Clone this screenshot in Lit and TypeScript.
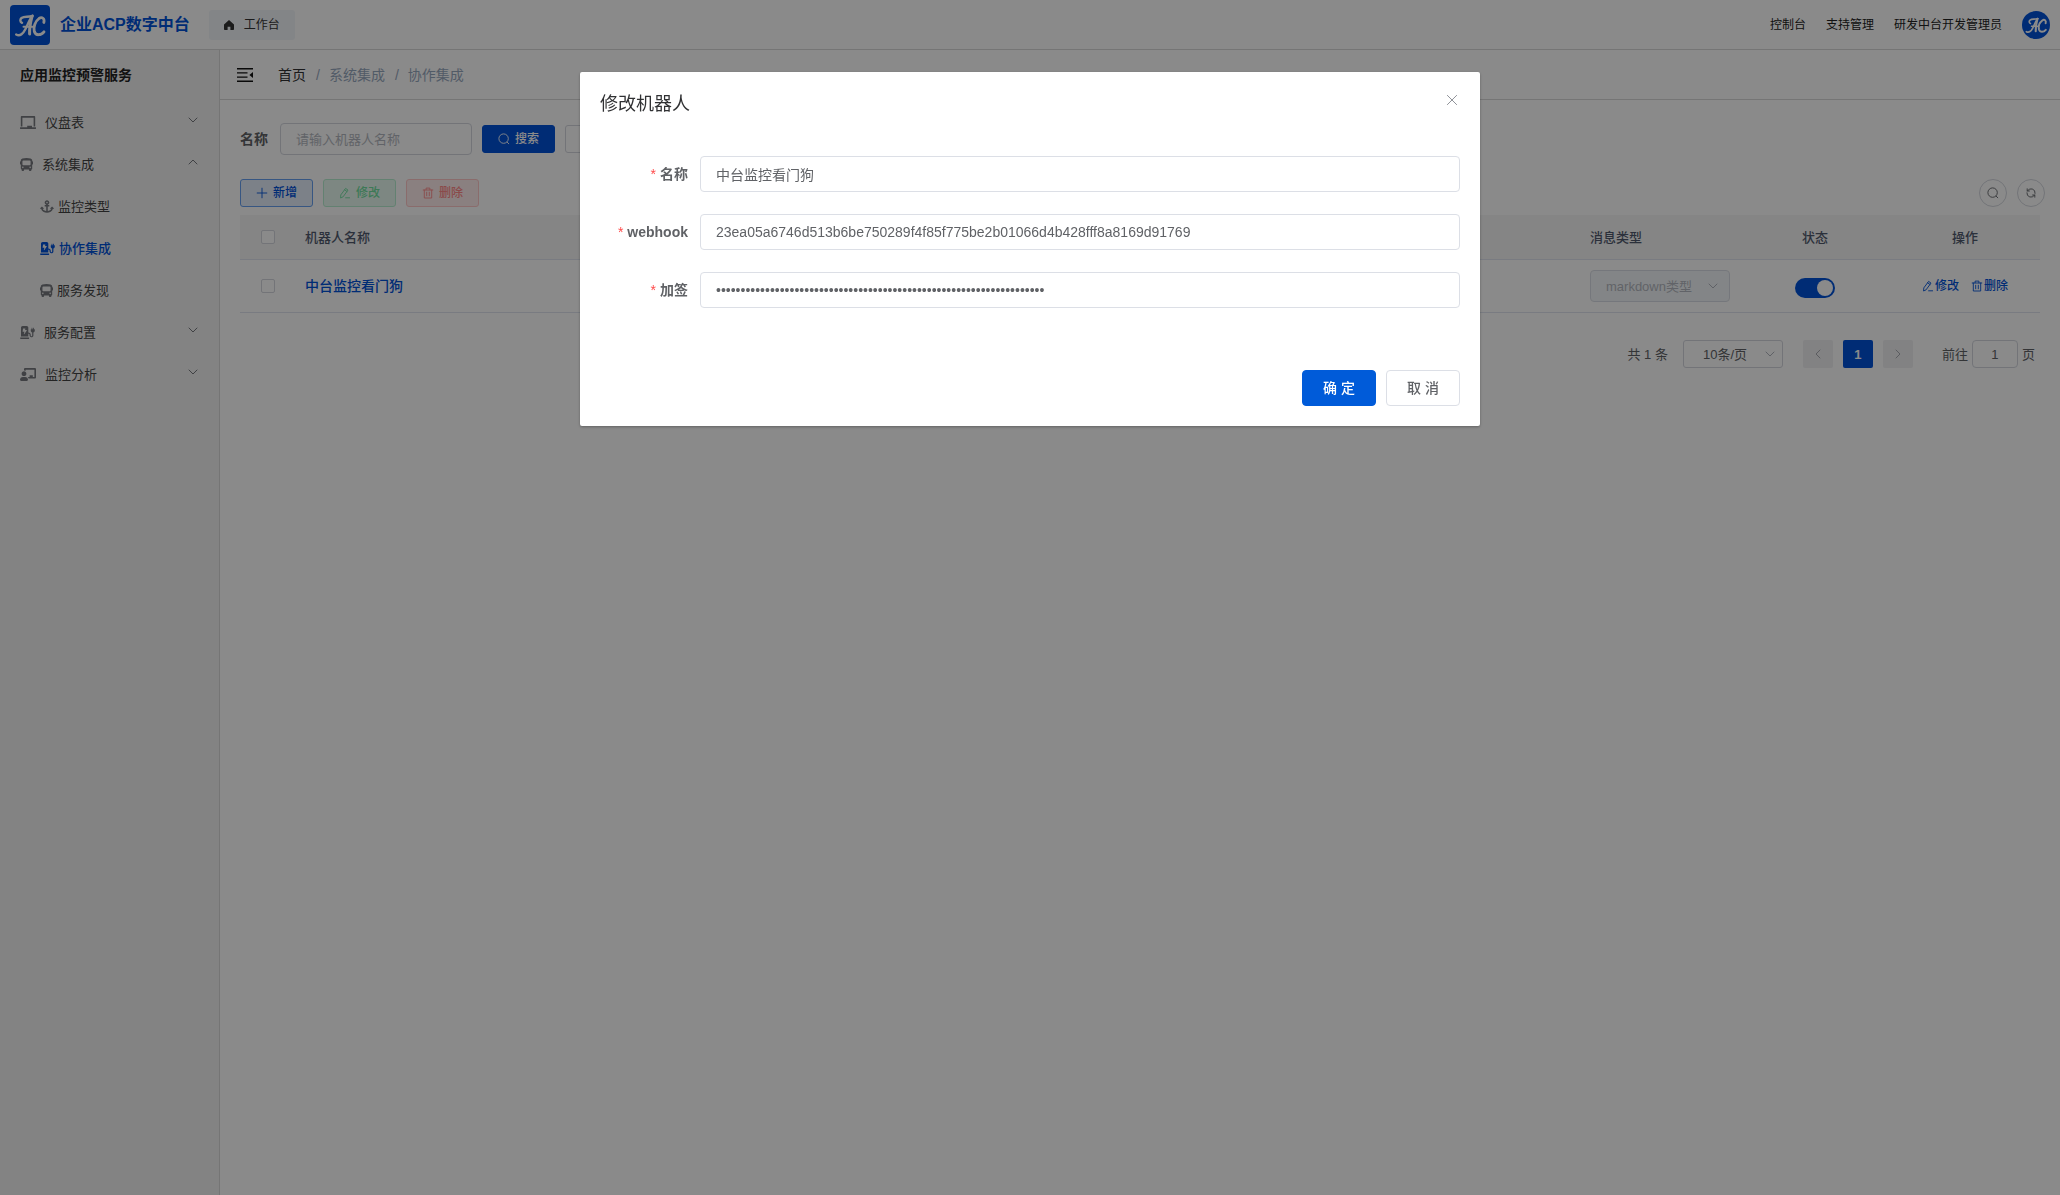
import { LitElement, html, css, svg, nothing } from "lit";
import { customElement, state } from "lit/decorators.js";
import { classMap } from "lit/directives/class-map.js";

type IconDef = { box: string; w: number; h: number; body: unknown };

const line = (d: string, sw = 64) =>
  svg`<path d=${d} fill="none" stroke="currentColor" stroke-width=${sw} stroke-linecap="round" stroke-linejoin="round"></path>`;
const solid = (d: string) => svg`<path d=${d} fill="currentColor"></path>`;

const ICONS: Record<string, IconDef> = {
  board: {
    box: "0 0 640 512", w: 16, h: 13,
    body: solid("M96 64h448v352h64V40c0-22.06-17.94-40-40-40H72C49.94 0 32 17.94 32 40v376h64V64zm528 384H480v-64H288v64H16c-8.84 0-16 7.16-16 16v32c0 8.84 7.16 16 16 16h608c8.84 0 16-7.16 16-16v-32c0-8.84-7.16-16-16-16z"),
  },
  bus: {
    box: "0 0 512 512", w: 13, h: 13,
    body: solid("M488 128h-8V80c0-44.8-99.2-80-224-80S32 35.2 32 80v48h-8c-13.25 0-24 10.74-24 24v80c0 13.25 10.75 24 24 24h8v160c0 17.67 14.33 32 32 32v32c0 17.67 14.33 32 32 32h32c17.67 0 32-14.33 32-32v-32h192v32c0 17.67 14.33 32 32 32h32c17.67 0 32-14.33 32-32v-32h6.4c16 0 25.6-12.8 25.6-25.6V256h8c13.25 0 24-10.75 24-24v-80c0-13.26-10.75-24-24-24zM112 400c-17.67 0-32-14.33-32-32s14.33-32 32-32 32 14.33 32 32-14.33 32-32 32zm16-112c-17.67 0-32-14.33-32-32V128c0-17.67 14.33-32 32-32h256c17.67 0 32 14.33 32 32v128c0 17.67-14.33 32-32 32H128zm272 112c-17.67 0-32-14.33-32-32s14.33-32 32-32 32 14.33 32 32-14.33 32-32 32z"),
  },
  anchor: {
    box: "0 0 576 512", w: 14, h: 13,
    body: solid("M12.971 352h32.394C67.172 454.735 181.944 512 288 512c106.229 0 220.853-57.38 242.635-160h32.394c10.691 0 16.045-12.926 8.485-20.485l-67.029-67.029c-4.686-4.686-12.284-4.686-16.971 0l-67.029 67.029c-7.56 7.56-2.206 20.485 8.485 20.485h35.146c-20.29 54.317-84.963 86.588-144.117 94.015V256h52c6.627 0 12-5.373 12-12v-40c0-6.627-5.373-12-12-12h-52v-5.47c37.281-13.226 63.995-48.725 64-90.495C384.005 43.001 340.93-.202 287.91.001 235.073.2 192 43.13 192 96c0 41.798 26.716 77.319 64 90.53V192h-52c-6.627 0-12 5.373-12 12v40c0 6.627 5.373 12 12 12h52v190.015c-58.936-7.399-123.82-39.679-144.117-94.015h35.146c10.691 0 16.045-12.926 8.485-20.485l-67.029-67.029c-4.686-4.686-12.284-4.686-16.971 0L4.486 331.515C-3.074 339.074 2.28 352 12.971 352zM288 64c17.645 0 32 14.355 32 32s-14.355 32-32 32-32-14.355-32-32 14.355-32 32-32z"),
  },
  station: {
    box: "0 0 576 512", w: 15, h: 13,
    body: solid("M336 448H16c-8.84 0-16 7.16-16 16v32c0 8.84 7.16 16 16 16h320c8.84 0 16-7.16 16-16v-32c0-8.84-7.16-16-16-16zm208-320V80c0-8.84-7.16-16-16-16s-16 7.16-16 16v48h-32V80c0-8.84-7.16-16-16-16s-16 7.16-16 16v48h-16c-8.84 0-16 7.16-16 16v32c0 35.76 23.62 65.69 56 75.93v118.49c0 13.95-9.5 26.92-23.26 29.19C431.22 402.5 416 388.99 416 372v-28c0-48.6-39.4-88-88-88h-8V64c0-35.35-28.65-64-64-64H96C60.65 0 32 28.65 32 64v352h288V304h8c22.09 0 40 17.91 40 40v24.61c0 39.67 28.92 75.16 68.41 79.01C481.71 452.05 520 416.41 520 372V251.93c32.38-10.24 56-40.17 56-75.93v-32c0-8.84-7.16-16-16-16h-16zm-283.91 47.76l-93.7 139c-2.2 3.33-6.21 5.24-10.39 5.24-7.67 0-13.47-6.28-11.67-12.92L167.35 224H108c-7.25 0-12.85-5.59-11.89-11.89l16-107C112.9 99.9 117.98 96 124 96h68c7.88 0 13.62 6.54 11.6 13.21L192 160h57.7c9.24 0 15.01 8.78 10.39 15.76z"),
  },
  teacher: {
    box: "0 0 640 512", w: 16, h: 13,
    body: solid("M208 352c-2.39 0-4.78.35-7.06 1.09C187.98 357.3 174.35 360 160 360c-14.35 0-27.98-2.7-40.95-6.91-2.28-.74-4.66-1.09-7.05-1.09C49.94 352-.33 402.48 0 464.62.14 490.88 21.73 512 48 512h224c26.27 0 47.86-21.12 48-47.38.33-62.14-49.94-112.62-112-112.62zm-48-32c53.02 0 96-42.98 96-96s-42.98-96-96-96-96 42.98-96 96 42.98 96 96 96zM592 0H208c-26.47 0-48 22.25-48 49.59V96c23.42 0 45.1 6.78 64 17.8V64h352v288h-64v-64H384v64h-76.24c19.1 16.69 33.12 38.73 39.69 64H592c26.47 0 48-22.25 48-49.59V49.59C640 22.25 618.47 0 592 0z"),
  },
  home: {
    box: "0 0 10 10", w: 10, h: 10,
    body: solid("M5 0 L10 4.6 V9.2 Q10 10 9.2 10 H6.4 V6.8 H3.6 V10 H0.8 Q0 10 0 9.2 V4.6 Z"),
  },
  down: { box: "0 0 10 10", w: 10, h: 10, body: line("M1 3 L5 7 L9 3", 1) },
  up: { box: "0 0 10 10", w: 10, h: 10, body: line("M1 7 L5 3 L9 7", 1) },
  left: { box: "0 0 10 10", w: 10, h: 10, body: line("M7 1 L3 5 L7 9", 1) },
  right: { box: "0 0 10 10", w: 10, h: 10, body: line("M3 1 L7 5 L3 9", 1) },
  search: {
    box: "0 0 12 12", w: 12, h: 12,
    body: svg`<circle cx="5.6" cy="5.6" r="4.7" fill="none" stroke="currentColor" stroke-width="0.9"></circle>${line("M9.2 9.2 L10.8 10.8", 0.9)}`,
  },
  plus: { box: "0 0 12 12", w: 12, h: 12, body: line("M6 1.2 V10.8 M1.2 6 H10.8", 0.9) },
  edit: { box: "0 0 12 12", w: 12, h: 12, body: line("M1.6 10.6 L1.8 7.9 L6.6 1.4 L9 3.1 L4.2 9.6 Z M5.6 2.8 L8 4.5 M6.6 10.8 H10.6", 0.9) },
  trash: { box: "0 0 12 12", w: 12, h: 12, body: line("M1.2 3 H10.8 M2.3 3 V11 H9.7 V3 M4.1 2.8 V1.1 H7.9 V2.8 M4.7 5.2 V8.8 M7.3 5.2 V8.8", 0.9) },
  refresh: { box: "0 0 12 12", w: 12, h: 12, body: line("M2.2 1.8 V4 H4.4 M2.4 4 A4.1 4.1 0 0 1 10.100 6.400 M9.800 10.200 V8 H7.600 M9.600 8 A4.100 4.100 0 0 1 1.900 5.800", 0.9) },
  close: { box: "0 0 12 12", w: 12, h: 12, body: line("M1.4 1.4 L10.6 10.6 M10.6 1.4 L1.4 10.6", 1) },
  fold: {
    box: "0 0 16 14", w: 16, h: 14,
    body: svg`<path d="M0 0h16v1.6H0zM0 4.2h10.5v1.4H0zM0 8.4h10.5v1.4H0zM0 12.4h16V14H0zM16 4v6l-3.6-3z" fill="currentColor"></path>`,
  },
};

const icon = (name: string) => {
  const i = ICONS[name];
  return html`<svg class="icon" viewBox=${i.box} width=${i.w} height=${i.h} aria-hidden="true">${i.body}</svg>`;
};

const mark = html`<svg class="mark" viewBox="0 0 40 40" aria-hidden="true">
  <g fill="none" stroke="currentColor" stroke-linecap="round" stroke-linejoin="round">
    <path stroke-width="2.4" d="M6.2 29.5 C10 31.5 13 29 15.5 24 C18 19 19.500 14.500 22.500 10.800"></path>
    <path stroke-width="2.4" d="M22.500 10.800 C18 12.500 14.500 10.800 11.500 13 C9.800 14.500 10 17 12 17.800"></path>
    <path stroke-width="3" d="M22 11.500 C20.500 17 19.300 23 19.600 29"></path>
    <path stroke-width="2" d="M13.500 21.800 H23.500"></path>
    <path stroke-width="2.800" d="M33.800 17.500 C35 13.500 32 11.500 29 13.500 C25 16.500 23.200 22 24.300 26.500 C25.800 31 31 30.500 34 26.800"></path>
  </g>
</svg>`;

const sheet = css`
  :host { display: block; }
  *, *::before, *::after { box-sizing: border-box; }
  button, input, select { font: inherit; margin: 0; }
  button { cursor: pointer; }
  a { text-decoration: none; }
  .icon { display: block; flex: none; }
`;

@customElement("top-bar")
class TopBar extends LitElement {
  static styles = [sheet, css`
    .bar { display: flex; align-items: center; height: 50px; padding: 0 10px; border-bottom: 1px solid #d8d8d8; background: #fff; }
    .logo { width: 40px; height: 40px; border-radius: 4px; background: #0052d9; color: #fff; }
    .mark { display: block; width: 100%; height: 100%; }
    .name { margin: 0 19px 0 10px; font-size: 16px; font-weight: 700; color: #0052d9; }
    .tab { display: flex; align-items: center; gap: 10px; height: 30px; padding: 0 15px; border: 0; border-radius: 3px; background: #f3f6fa; color: #333; font-size: 12px; }
    .links { display: flex; align-items: center; gap: 20px; margin-left: auto; font-size: 12px; }
    .links a { color: #222; }
    .avatar { width: 28px; height: 28px; border-radius: 50%; background: #0052d9; color: #fff; overflow: hidden; }
  `];
  render() {
    return html`<header class="bar">
      <div class="logo">${mark}</div>
      <div class="name">企业ACP数字中台</div>
      <button class="tab">${icon("home")}工作台</button>
      <nav class="links">
        <a href="#console">控制台</a><a href="#support">支持管理</a><a href="#user">研发中台开发管理员</a>
        <div class="avatar">${mark}</div>
      </nav>
    </header>`;
  }
}

const MENU = [
  { icon: "board", text: "仪盘表", open: false, children: [] },
  {
    icon: "bus", text: "系统集成", open: true,
    children: [
      { icon: "anchor", text: "监控类型", active: false },
      { icon: "station", text: "协作集成", active: true },
      { icon: "bus", text: "服务发现", active: false },
    ],
  },
  { icon: "station", text: "服务配置", open: false, children: [] },
  { icon: "teacher", text: "监控分析", open: false, children: [] },
];

@customElement("side-menu")
class SideMenu extends LitElement {
  static styles = [sheet, css`
    :host { display: flex; }
    .side { flex: 1; background: #f3f3f3; border-right: 1px solid #d8d8d8; font-size: 13px; color: #444; }
    .title { padding: 0 20px; line-height: 50px; font-size: 14px; font-weight: 700; color: #222; }
    ul { list-style: none; margin: 0; padding: 0; }
    .menu { padding-top: 1px; }
    .item { display: flex; align-items: center; width: 100%; height: 42px; padding: 0 20px; border: 0; background: none; color: inherit; gap: 9px; }
    .item .icon { color: #76797f; }
    .item .label { flex: 1; text-align: left; }
    .sub { gap: 4px; padding-left: 40px; }
    .active, .item.active .icon { color: #0052d9; }
    .active { font-weight: 500; }
    .arrow { padding: 0 1px 4px 0; }
  `];
  render() {
    return html`<nav class="side">
      <div class="title">应用监控预警服务</div>
      <ul class="menu">
        ${MENU.map((m) => html`<li>
          <button class="item" aria-expanded=${m.open}>${icon(m.icon)}<span class="label">${m.text}</span><span class="arrow">${icon(m.open ? "up" : "down")}</span></button>
          ${m.children.length
            ? html`<ul>${m.children.map((c) => html`<li><a href="#" class=${classMap({ item: true, sub: true, active: c.active })}>${icon(c.icon)}<span class="label">${c.text}</span></a></li>`)}</ul>`
            : nothing}
        </li>`)}
      </ul>
    </nav>`;
  }
}

@customElement("robot-list")
class RobotList extends LitElement {
  static styles = [sheet, css`
    .crumbs { display: flex; align-items: center; height: 50px; padding: 0 17px; border-bottom: 1px solid #d8d8d8; font-size: 14px; }
    .fold { padding: 0; border: 0; background: none; color: #111; margin-right: 25px; }
    .crumbs ol { display: flex; list-style: none; margin: 0; padding: 0; }
    .crumbs a { color: #303133; }
    .crumbs .here { color: #97a8be; }
    .crumbs li + li::before { content: "/"; margin: 0 9px 0 10px; color: #97a8be; }
    .body { padding: 23px 20px; }
    .search { display: flex; align-items: center; gap: 10px; height: 32px; }
    .search label { font-size: 14px; font-weight: 700; color: #606266; margin-right: 2px; }
    .field { width: 192px; height: 32px; padding: 0 15px; border: 1px solid #d4d7de; border-radius: 4px; background: #fff; font-size: 13px; color: #606266; }
    .field::placeholder { color: #b4b8c0; }
    .btn { display: inline-flex; align-items: center; gap: 5px; height: 28px; padding: 0 15px; border: 1px solid #d4d7de; border-radius: 3px; background: #fff; font-size: 12px; font-weight: 500; color: #606266; }
    .solid { background: #0052d9; border-color: #0052d9; color: #fff; }
    .add { background: #e6eefb; border-color: #66a0f0; color: #0052d9; }
    .edit { background: #e7faf0; border-color: #b8efd1; color: #71dfa0; }
    .del { background: #ffeded; border-color: #ffc8c8; color: #ff8a8a; }
    .tools { display: flex; gap: 10px; padding: 24px 0 8px; }
    .round { display: flex; align-items: center; justify-content: center; width: 28px; height: 28px; padding: 0; border: 1px solid #d4d7de; border-radius: 50%; background: #fff; color: #606266; }
    .right { display: flex; gap: 10px; margin: 0 -5px 0 auto; }
    table { width: 100%; border-collapse: separate; border-spacing: 0; table-layout: fixed; font-size: 13px; color: #606266; }
    th { height: 45px; background: #f5f5f5; color: #515a6e; font-weight: 500; text-align: left; }
    td { height: 53px; }
    th, td { padding: 0 10px; border-bottom: 1px solid #dfe4ee; }
    .c-check { width: 55px; }
    .c-type { width: 160px; }
    .c-state { width: 150px; }
    .mid { text-align: center; }
    .check { display: block; appearance: none; width: 14px; height: 14px; margin: 0 auto; border: 1px solid #d4d7de; border-radius: 2px; background: #fff; }
    .robot { font-size: 14px; font-weight: 500; color: #0052d9; }
    .pick { position: relative; display: flex; align-items: center; width: 140px; height: 32px; }
    .pick select, .size select { appearance: none; width: 100%; height: 100%; padding: 0 15px; border: 1px solid #d9dde5; border-radius: 4px; background: #f3f6fa; color: #b4b8c0; opacity: 1; }
    .pick .icon, .size .icon { position: absolute; right: 12px; color: #b0b4bc; pointer-events: none; }
    .switch { display: block; position: relative; appearance: none; width: 40px; height: 20px; margin: 3px auto 0; border-radius: 10px; background: #0052d9; cursor: pointer; }
    .switch::after { content: ""; position: absolute; top: 2px; right: 2px; width: 16px; height: 16px; border-radius: 50%; background: #fff; }
    .acts { display: flex; justify-content: center; gap: 12px; }
    .act { display: flex; align-items: center; gap: 1px; padding: 0; border: 0; background: none; color: #0052d9; font-size: 12px; font-weight: 500; }
    .pager { display: flex; align-items: center; justify-content: flex-end; gap: 10px; padding: 27px 5px 0; font-size: 13px; color: #606266; }
    .size { position: relative; display: flex; align-items: center; width: 100px; height: 28px; margin: 0 10px 0 5px; }
    .size select { background: #fff; color: #606266; border-radius: 3px; border-color: #d4d7de; padding: 0 19px; }
    .size .icon { right: 8px; }
    .page { display: flex; align-items: center; justify-content: center; width: 30px; height: 28px; padding: 0; border: 0; border-radius: 2px; background: #f1f1f2; color: #a8abb2; font-weight: 700; }
    .now { background: #0052d9; color: #fff; }
    .jump { display: flex; align-items: center; gap: 4px; margin-left: 19px; }
    .jump input { width: 46px; height: 28px; padding: 0 3px; border: 1px solid #d4d7de; border-radius: 4px; text-align: center; color: #606266; background: #fff; }
  `];
  render() {
    return html`
      <div class="crumbs">
        <button class="fold" aria-label="折叠菜单">${icon("fold")}</button>
        <ol><li><a href="#home">首页</a></li><li class="here">系统集成</li><li class="here">协作集成</li></ol>
      </div>
      <main class="body">
        <form class="search">
          <label for="q">名称</label>
          <input class="field" id="q" placeholder="请输入机器人名称" />
          <button type="button" class="btn solid">${icon("search")}搜索</button>
          <button type="button" class="btn">${icon("refresh")}重置</button>
        </form>
        <div class="tools">
          <button class="btn add">${icon("plus")}新增</button>
          <button class="btn edit" disabled>${icon("edit")}修改</button>
          <button class="btn del" disabled>${icon("trash")}删除</button>
          <div class="right">
            <button class="round" aria-label="搜索">${icon("search")}</button>
            <button class="round" aria-label="刷新">${icon("refresh")}</button>
          </div>
        </div>
        <table>
          <colgroup><col class="c-check" /><col /><col class="c-type" /><col class="c-state" /><col class="c-state" /></colgroup>
          <thead><tr>
            <th><input class="check" type="checkbox" aria-label="全选" /></th>
            <th>机器人名称</th><th>消息类型</th><th class="mid">状态</th><th class="mid">操作</th>
          </tr></thead>
          <tbody><tr>
            <td><input class="check" type="checkbox" aria-label="选择" /></td>
            <td><a class="robot" href="#robot">中台监控看门狗</a></td>
            <td><div class="pick"><select disabled aria-label="消息类型"><option>markdown类型</option></select>${icon("down")}</div></td>
            <td><input class="switch" type="checkbox" role="switch" checked aria-label="状态" /></td>
            <td><div class="acts">
              <button class="act">${icon("edit")}修改</button>
              <button class="act">${icon("trash")}删除</button>
            </div></td>
          </tr></tbody>
        </table>
        <div class="pager">
          <span>共 1 条</span>
          <div class="size"><select aria-label="每页条数"><option>10条/页</option></select>${icon("down")}</div>
          <button class="page" disabled aria-label="上一页">${icon("left")}</button>
          <button class="page now">1</button>
          <button class="page" disabled aria-label="下一页">${icon("right")}</button>
          <div class="jump"><label for="go">前往</label><input id="go" value="1" /><span>页</span></div>
        </div>
      </main>`;
  }
}

@customElement("robot-dialog")
class RobotDialog extends LitElement {
  static styles = [sheet, css`
    .mask { position: fixed; inset: 0; display: flex; justify-content: center; align-items: flex-start; padding: 72px 20px 20px; background: rgba(0, 0, 0, 0.46); }
    .box { width: 100%; max-width: 900px; padding: 20px; border-radius: 2px; background: #fff; box-shadow: 0 1px 3px rgba(0, 0, 0, 0.3); color: #606266; font-size: 14px; }
    .head { display: flex; justify-content: space-between; align-items: flex-start; margin-bottom: 40px; }
    h2 { margin: 0; line-height: 24px; font-size: 18px; font-weight: 400; color: #303133; }
    .x { display: flex; padding: 2px; border: 0; background: none; color: #909399; }
    .row { display: grid; grid-template-columns: 88px 1fr; column-gap: 12px; align-items: center; margin-bottom: 22px; }
    .row label { text-align: right; font-weight: 700; white-space: nowrap; }
    .row label::before { content: "*"; margin-right: 4px; color: #ff4949; font-weight: 400; }
    .row input { width: 100%; height: 36px; padding: 0 15px; border: 1px solid #dcdfe6; border-radius: 4px; background: #fff; color: #606266; }
    .foot { display: flex; justify-content: flex-end; gap: 10px; padding-top: 40px; }
    .foot button { width: 74px; height: 36px; padding: 0; border: 1px solid #dcdfe6; border-radius: 4px; background: #fff; color: #606266; font-weight: 500; }
    .foot .ok { background: #005bd9; border-color: #005bd9; color: #fff; }
  `];
  @state() secret = "SEC".padEnd(67, "0");
  render() {
    return html`<div class="mask">
      <section class="box" role="dialog" aria-modal="true" aria-labelledby="t">
        <div class="head"><h2 id="t">修改机器人</h2><button class="x" aria-label="关闭">${icon("close")}</button></div>
        <form>
          <div class="row"><label for="n">名称</label><input id="n" value="中台监控看门狗" /></div>
          <div class="row"><label for="w">webhook</label><input id="w" value="23ea05a6746d513b6be750289f4f85f775be2b01066d4b428fff8a8169d91769" /></div>
          <div class="row"><label for="s">加签</label><input id="s" type="password" .value=${this.secret} /></div>
          <div class="foot"><button type="button" class="ok">确 定</button><button type="button">取 消</button></div>
        </form>
      </section>
    </div>`;
  }
}

@customElement("app-root")
class AppRoot extends LitElement {
  static styles = [sheet, css`
    :host { font-family: "Liberation Sans", "Noto Sans CJK SC", sans-serif; line-height: 1; }
    .page { display: flex; flex-direction: column; min-height: 100vh; background: #fff; }
    .cols { display: grid; grid-template-columns: 220px minmax(0, 1fr); flex: 1; }
  `];
  render() {
    return html`<div class="page">
        <top-bar></top-bar>
        <div class="cols"><side-menu></side-menu><robot-list></robot-list></div>
      </div>
      <robot-dialog></robot-dialog>`;
  }
}
